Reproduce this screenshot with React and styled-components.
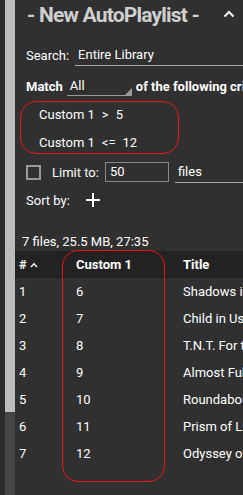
import React from 'react'
import styled, { createGlobalStyle } from 'styled-components'

const GlobalStyle = createGlobalStyle`
    html, body {
        margin: 0;
        padding: 0;
        background: #303030;
    }
    body {
        font-family: Roboto, "Liberation Sans", sans-serif;
        color: #fff;
        font-size: 13px;
    }
`

const criteria = [
    { field: 'Custom 1', op: '>', value: '5' },
    { field: 'Custom 1', op: '<=', value: '12' },
]

const tracks = [
    { n: 1, custom: 6, title: 'Shadows in the Dark' },
    { n: 2, custom: 7, title: 'Child in Us' },
    { n: 3, custom: 8, title: 'T.N.T. For the Brain' },
    { n: 4, custom: 9, title: 'Almost Full Moon' },
    { n: 5, custom: 10, title: 'Roundabout' },
    { n: 6, custom: 11, title: 'Prism of Light' },
    { n: 7, custom: 12, title: 'Odyssey of the Mind' },
]

const App = () => {
    return (
        <>
            <GlobalStyle />
            <Frame>
                <LeftEdge />
                <ScrollTrack>
                    <ScrollThumb />
                </ScrollTrack>
                <Main>
                    <Header>
                        <Title>- New AutoPlaylist -</Title>
                        <Caret viewBox="0 0 12 8" width="12" height="8">
                            <path d="M1.5 6.5 L6 2 L10.5 6.5" fill="none" stroke="#fff" strokeWidth="2" />
                        </Caret>
                    </Header>

                    <Form>
                        <Row height={34}>
                            <Label>Search:</Label>
                            <LineInput>Entire Library</LineInput>
                        </Row>
                        <Row height={28} gap={4}>
                            <Label bold>Match</Label>
                            <Select>All</Select>
                            <Label bold>of the following criteria</Label>
                        </Row>
                        <Criteria>
                            {criteria.map((c, i) => (
                                <Criterion key={i}>
                                    <span>{c.field}</span>
                                    <span>{c.op}</span>
                                    <span>{c.value}</span>
                                </Criterion>
                            ))}
                        </Criteria>
                        <Row height={28}>
                            <Checkbox />
                            <Label>Limit to:</Label>
                            <BoxInput>50</BoxInput>
                            <LineInput>files</LineInput>
                        </Row>
                        <Row height={28}>
                            <Label>Sort by:</Label>
                            <AddButton viewBox="0 0 14 14" width="14" height="14">
                                <path d="M7 0 V14 M0 7 H14" stroke="#fff" strokeWidth="2" />
                            </AddButton>
                        </Row>
                    </Form>

                    <Stats>7 files, 25.5 MB, 27:35</Stats>

                    <Table>
                        <HeadRow>
                            <NumCell>
                                # <SortArrow viewBox="0 0 8 6" width="8" height="6">
                                    <path d="M1 5 L4 1.8 L7 5" fill="none" stroke="#fff" strokeWidth="1.4" />
                                </SortArrow>
                            </NumCell>
                            <CustomCell>Custom 1</CustomCell>
                            <TitleCell>Title</TitleCell>
                        </HeadRow>
                        {tracks.map(t => (
                            <BodyRow key={t.n}>
                                <NumCell>{t.n}</NumCell>
                                <CustomCell>{t.custom}</CustomCell>
                                <TitleCell>{t.title}</TitleCell>
                            </BodyRow>
                        ))}
                    </Table>

                    <Highlight top={101} left={5} width={157} height={51} />
                    <Highlight top={250} left={47} width={101} height={230} />
                </Main>
            </Frame>
        </>
    )
}

export default App

const Frame = styled.div`
    display: flex;
    width: 243px;
    height: 495px;
    overflow: hidden;
`

const LeftEdge = styled.div`
    width: 5px;
    background: #2b2b2b;
`

const ScrollTrack = styled.div`
    width: 10px;
    background: #444;
`

const ScrollThumb = styled.div`
    height: 412px;
    background: #bcbcbc;
`

const Main = styled.div`
    flex: 1;
    position: relative;
    background: #303030;
    overflow: hidden;
`

const Header = styled.div`
    height: 30px;
    display: flex;
    align-items: center;
    justify-content: space-between;
    padding: 0 8px 0 12px;
`

const Title = styled.div`
    font-size: 21px;
    font-weight: bold;
    letter-spacing: -0.8px;
    color: #cfcfcf;
    white-space: nowrap;
`

const Caret = styled.svg`
    display: block;
    margin-top: -2px;
`

const Form = styled.div`
    padding: 8px 0 0 11px;
    display: flex;
    flex-direction: column;
`

const Row = styled.div`
    height: ${p => p.height}px;
    display: flex;
    align-items: center;
    gap: ${p => p.gap ?? 6}px;
    white-space: nowrap;
`

const Label = styled.span`
    font-weight: ${p => (p.bold ? 'bold' : 'normal')};
    flex-shrink: 0;
`

const LineInput = styled.div`
    flex: 1;
    min-width: 0;
    height: 20px;
    line-height: 20px;
    padding-left: 3px;
    border-bottom: 1px solid #aaa;
`

const Select = styled.div`
    position: relative;
    width: 62px;
    height: 18px;
    line-height: 18px;
    padding-left: 3px;
    flex-shrink: 0;
    border-bottom: 1px solid #999;

    &::after {
        content: '';
        position: absolute;
        right: 0;
        bottom: 0;
        border-style: solid;
        border-width: 0 0 7px 7px;
        border-color: transparent transparent #999 transparent;
    }
`

const Criteria = styled.div`
    padding: 0 0 2px 13px;
    display: flex;
    flex-direction: column;
`

const Criterion = styled.div`
    height: 28px;
    display: flex;
    align-items: center;
    gap: 7px;
`

const Checkbox = styled.div`
    width: 11px;
    height: 11px;
    border: 2px solid #999;
    margin-right: 5px;
    flex-shrink: 0;
`

const BoxInput = styled.div`
    width: 58px;
    height: 18px;
    line-height: 18px;
    padding-left: 4px;
    border: 1px solid #888;
    flex-shrink: 0;
`

const AddButton = styled.svg`
    display: block;
    margin-left: 10px;
`

const Stats = styled.div`
    margin-top: 19px;
    padding-left: 7px;
    height: 18px;
    line-height: 18px;
`

const Table = styled.div`
    display: flex;
    flex-direction: column;
`

const HeadRow = styled.div`
    display: flex;
    align-items: center;
    height: 27px;
    background: #222;
    font-weight: bold;
`

const BodyRow = styled.div`
    display: flex;
    align-items: center;
    height: 27px;
`

const NumCell = styled.div`
    width: 57px;
    padding-left: 4px;
    display: flex;
    align-items: center;
    gap: 3px;
`

const SortArrow = styled.svg`
    display: block;
`

const CustomCell = styled.div`
    width: 107px;
`

const TitleCell = styled.div`
    flex: 1;
    white-space: nowrap;
    overflow: hidden;
`

const Highlight = styled.div`
    position: absolute;
    top: ${p => p.top}px;
    left: ${p => p.left}px;
    width: ${p => p.width}px;
    height: ${p => p.height}px;
    border: 1px solid #e8141c;
    border-radius: 16px;
    pointer-events: none;
`
